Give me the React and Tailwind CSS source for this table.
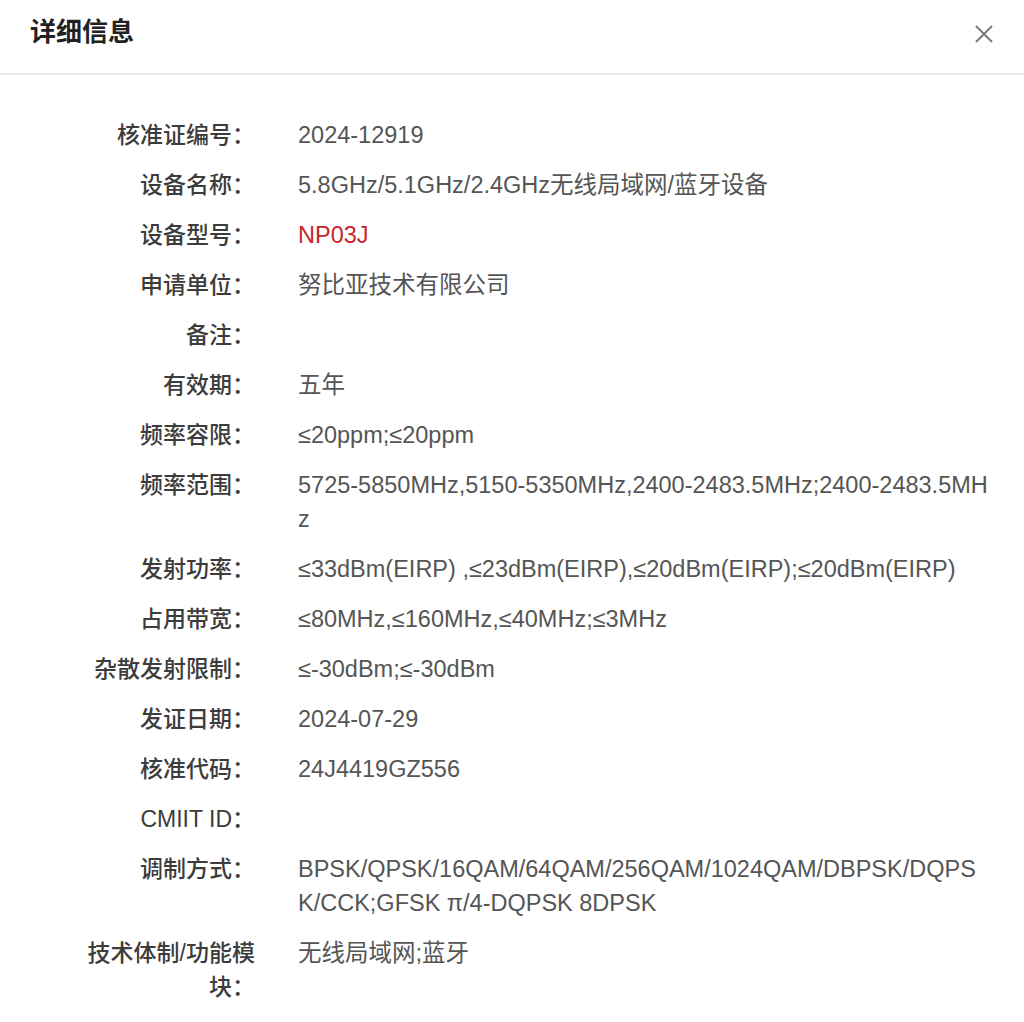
import React from "react"

const rows = [
  { label: "核准证编号：", value: "2024-12919" },
  { label: "设备名称：", value: "5.8GHz/5.1GHz/2.4GHz无线局域网/蓝牙设备" },
  { label: "设备型号：", value: "NP03J", red: true },
  { label: "申请单位：", value: "努比亚技术有限公司" },
  { label: "备注：", value: "" },
  { label: "有效期：", value: "五年" },
  { label: "频率容限：", value: "≤20ppm;≤20ppm" },
  { label: "频率范围：", value: "5725-5850MHz,5150-5350MHz,2400-2483.5MHz;2400-2483.5MHz" },
  { label: "发射功率：", value: "≤33dBm(EIRP) ,≤23dBm(EIRP),≤20dBm(EIRP);≤20dBm(EIRP)" },
  { label: "占用带宽：", value: "≤80MHz,≤160MHz,≤40MHz;≤3MHz" },
  { label: "杂散发射限制：", value: "≤-30dBm;≤-30dBm" },
  { label: "发证日期：", value: "2024-07-29" },
  { label: "核准代码：", value: "24J4419GZ556" },
  { label: "CMIIT ID：", value: "" },
  { label: "调制方式：", value: "BPSK/QPSK/16QAM/64QAM/256QAM/1024QAM/DBPSK/DQPSK/CCK;GFSK π/4-DQPSK 8DPSK" },
  { label: "技术体制/功能模块：", value: "无线局域网;蓝牙" },
]

export default function App() {
  return (
    <div className="min-h-screen bg-white font-['Liberation_Sans','Noto_Sans_CJK_SC',sans-serif]">
      <div className="h-[75px] flex items-start justify-between px-[30px] pt-[14px] border-b-2 border-[#e8e8e8]">
        <h1 className="text-[26px] leading-[36px] font-bold text-[#222]">详细信息</h1>
        <button className="mt-[11px] mr-[1px] text-[#7a7a7a]">
          <svg width="18" height="18" viewBox="0 0 18 18" fill="none" stroke="currentColor" strokeWidth="2">
            <path d="M1 1L17 17M17 1L1 17" />
          </svg>
        </button>
      </div>

      <div className="pt-[43px] pl-[79px] pr-[34px]">
        {rows.map((row) => (
          <div key={row.label} className="flex mb-[16px] leading-[34px]">
            <div className="w-[176px] shrink-0 text-right text-[23px] font-medium text-[#3c3c3c]">{row.label}</div>
            <div className={`ml-[43px] flex-1 break-all text-[23.5px] ${row.red ? "text-[#c8252c]" : "text-[#555]"}`}>
              {row.value}
            </div>
          </div>
        ))}
      </div>
    </div>
  )
}
